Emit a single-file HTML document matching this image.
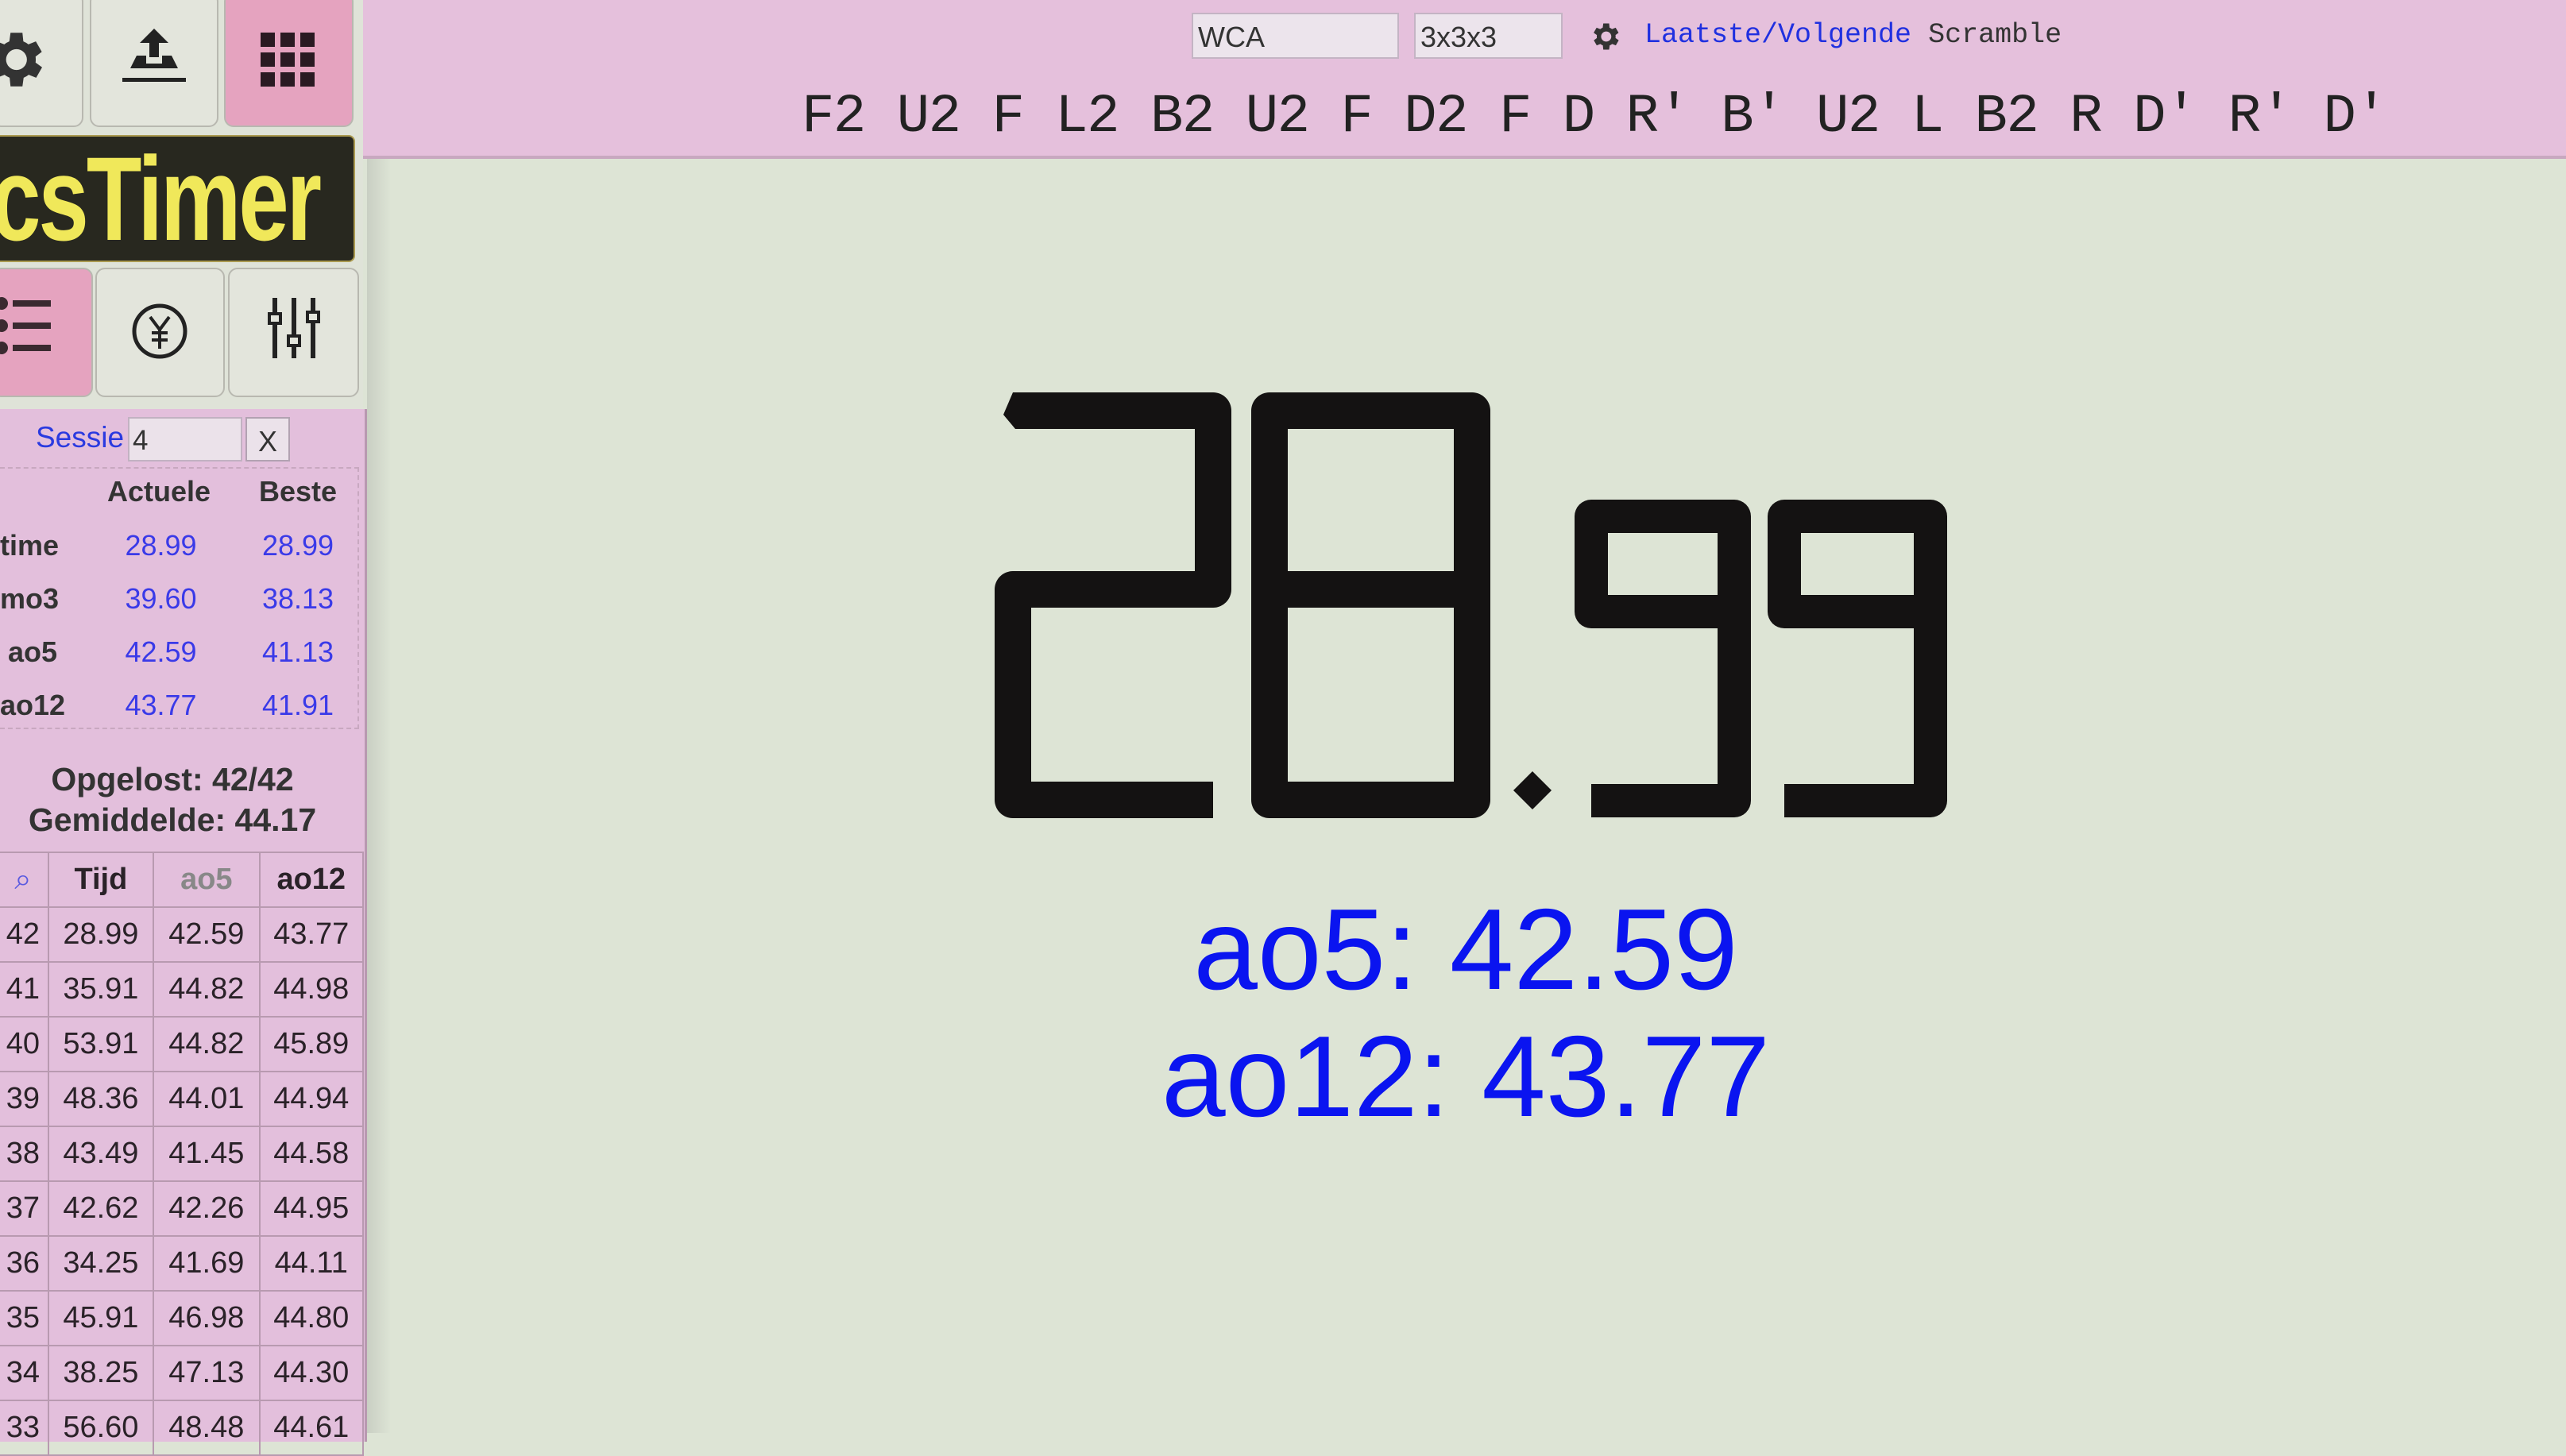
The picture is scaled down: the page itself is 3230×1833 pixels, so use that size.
<!DOCTYPE html>
<html><head><meta charset="utf-8"><style>
*{margin:0;padding:0;box-sizing:border-box}
body{width:3230px;height:1804px;overflow:hidden;background:#dde4d5;font-family:"Liberation Sans",sans-serif;position:relative}
.a{position:absolute}
.btn{position:absolute;background:#e3e5dc;border:2px solid #b8b8b0;border-radius:12px}
.pk{background:#e5a3bf}
.sb{position:absolute;left:0;top:515px;width:462px;height:1300px;background:#e3bfdc;border-right:3px solid #b898b0}
.c{position:absolute;text-align:center}
td{border:2px solid #b89ab0;text-align:center;font-size:38px;color:#2a2228;height:69px}
</style></head><body>
<div class="a" style="left:462px;top:0;width:30px;height:1804px;background:linear-gradient(90deg,#c9cfc3,#dde4d5)"></div>
<!-- top bar -->
<div class="a" style="left:457px;top:0;width:2773px;height:200px;background:#e5c0dc;border-bottom:4px solid #c8a8c0"></div>
<div class="a" style="left:1500px;top:16px;width:261px;height:58px;background:#ece4ec;border:2px solid #c4b4c4;font-size:36px;padding:8px 6px;color:#333">WCA</div>
<div class="a" style="left:1780px;top:16px;width:187px;height:58px;background:#ece4ec;border:2px solid #c4b4c4;font-size:36px;padding:8px 6px;color:#333">3x3x3</div>
<svg class="a" style="left:1998px;top:24px" width="44" height="44" viewBox="0 0 24 24"><path fill="#333" d="M19.4 13a7.5 7.5 0 000-2l2.1-1.6-2-3.5-2.5 1a7 7 0 00-1.7-1L15 3h-4l-.4 2.9a7 7 0 00-1.7 1l-2.5-1-2 3.5L6.6 11a7.5 7.5 0 000 2l-2.1 1.6 2 3.5 2.5-1a7 7 0 001.7 1L11 21h4l.4-2.9a7 7 0 001.7-1l2.5 1 2-3.5zM13 15.5a3.5 3.5 0 110-7 3.5 3.5 0 010 7z"/></svg>
<div class="a" style="left:2070px;top:24px;font-family:'Liberation Mono',monospace;font-size:35px;color:#2030e0;white-space:nowrap">Laatste/Volgende <span style="color:#333">Scramble</span></div>
<div class="a" style="left:1009px;top:108px;font-family:'Liberation Mono',monospace;font-size:69px;color:#222;white-space:nowrap;letter-spacing:-1.5px">F2 U2 F L2 B2 U2 F D2 F D R' B' U2 L B2 R D' R' D'</div>
<!-- sidebar buttons -->
<div class="a" style="left:0;top:0;width:457px;height:515px;background:#dfe3d8"></div>
<div class="btn" style="left:-10px;top:-10px;width:115px;height:170px"></div>
<svg class="a" style="left:-28px;top:30px" width="90" height="90" viewBox="0 0 24 24"><path fill="#333" d="M19.4 13a7.5 7.5 0 000-2l2.1-1.6-2-3.5-2.5 1a7 7 0 00-1.7-1L15 3h-4l-.4 2.9a7 7 0 00-1.7 1l-2.5-1-2 3.5L6.6 11a7.5 7.5 0 000 2l-2.1 1.6 2 3.5 2.5-1a7 7 0 001.7 1L11 21h4l.4-2.9a7 7 0 001.7-1l2.5 1 2-3.5zM13 15.5a3.5 3.5 0 110-7 3.5 3.5 0 010 7z"/></svg>
<div class="btn" style="left:113px;top:-10px;width:162px;height:170px"></div>
<svg class="a" style="left:154px;top:36px" width="80" height="72" viewBox="0 0 80 72"><path fill="#222" d="M40 0L22 18h12v18h12V18h12z"/><path fill="#222" d="M10 50l8-16h12v10h20V34h12l8 16z"/><rect x="0" y="62" width="80" height="5" fill="#222"/></svg>
<div class="btn pk" style="left:282px;top:-10px;width:163px;height:170px"></div>
<svg class="a" style="left:328px;top:41px" width="68" height="68" viewBox="0 0 68 68" fill="#2a1a22"><rect x="0" y="0" width="18" height="18"/><rect x="25" y="0" width="18" height="18"/><rect x="50" y="0" width="18" height="18"/><rect x="0" y="25" width="18" height="18"/><rect x="25" y="25" width="18" height="18"/><rect x="50" y="25" width="18" height="18"/><rect x="0" y="50" width="18" height="18"/><rect x="25" y="50" width="18" height="18"/><rect x="50" y="50" width="18" height="18"/></svg>
<div class="a" style="left:-10px;top:170px;width:457px;height:160px;background:#28281f;border-radius:8px;border:2px solid #aa9a50;overflow:hidden"></div>
<div class="a" style="left:-398px;top:180px;font-size:150px;font-weight:bold;color:#f0e85a;letter-spacing:-4px;transform:scaleX(.76);transform-origin:right;width:800px;text-align:right;line-height:140px;white-space:nowrap;font-family:'Liberation Sans',sans-serif">csTimer</div>
<div class="btn pk" style="left:-10px;top:337px;width:127px;height:163px"></div>
<svg class="a" style="left:-8px;top:370px" width="80" height="80" viewBox="0 0 80 80" fill="#3a2a30"><circle cx="10" cy="12" r="8"/><circle cx="10" cy="40" r="8"/><circle cx="10" cy="68" r="8"/><rect x="24" y="8" width="48" height="8"/><rect x="24" y="36" width="48" height="8"/><rect x="24" y="64" width="48" height="8"/></svg>
<div class="btn" style="left:120px;top:337px;width:163px;height:163px"></div>
<svg class="a" style="left:165px;top:381px" width="72" height="72" viewBox="0 0 72 72"><circle cx="36" cy="36" r="32" fill="none" stroke="#222" stroke-width="5"/><path d="M24 18l12 16 12-16M36 34v24M26 38h20M26 47h20" stroke="#222" stroke-width="4" fill="none"/></svg>
<div class="btn" style="left:287px;top:337px;width:165px;height:163px"></div>
<svg class="a" style="left:335px;top:375px" width="70" height="76" viewBox="0 0 70 76" fill="none" stroke="#222" stroke-width="6"><path d="M11 0v76M35 0v76M59 0v76"/><rect x="4" y="20" width="14" height="12" fill="#e3e5dc" stroke-width="4"/><rect x="28" y="48" width="14" height="12" fill="#e3e5dc" stroke-width="4"/><rect x="52" y="18" width="14" height="12" fill="#e3e5dc" stroke-width="4"/></svg>
<!-- session panel -->
<div class="sb"></div>
<div class="a" style="left:45px;top:530px;font-size:37px;color:#2a3ae0">Sessie</div>
<div class="a" style="left:161px;top:525px;width:144px;height:56px;background:#ebe2ea;border:2px solid #c2b2c2;font-size:35px;padding:8px 4px;color:#333">4</div>
<div class="a" style="left:309px;top:525px;width:56px;height:56px;background:#ebe2ea;border:2px solid #b2a2b2;font-size:36px;text-align:center;padding-top:8px;color:#333">X</div>
<div class="a" style="left:0;top:588px;width:452px;height:330px;border:2px dashed #c8a8c0;border-left:none"></div>
<div class="c" style="left:120px;top:598px;width:160px;font-size:36px;font-weight:bold;color:#333">Actuele</div>
<div class="c" style="left:300px;top:598px;width:150px;font-size:36px;font-weight:bold;color:#333">Beste</div>
<div class="a" style="left:0;top:653px;font-size:36px;color:#333;line-height:67px;font-weight:bold">time<br>mo3<br>&nbsp;ao5<br>ao12</div>
<div class="c" style="left:120px;top:653px;width:165px;font-size:36px;color:#3a3ae8;line-height:67px">28.99<br>39.60<br>42.59<br>43.77</div>
<div class="c" style="left:300px;top:653px;width:150px;font-size:36px;color:#3a3ae8;line-height:67px">28.99<br>38.13<br>41.13<br>41.91</div>
<div class="c" style="left:0;top:956px;width:434px;font-size:41px;font-weight:bold;color:#333;line-height:51px">Opgelost: 42/42<br>Gemiddelde: 44.17</div>
<table class="a" style="left:-4px;top:1072px;border-collapse:collapse;width:462px">
<colgroup><col style="width:64px"><col style="width:133px"><col style="width:134px"><col style="width:131px"></colgroup>
<tr><td style="color:#5a5ae0">&#x2315;</td><td><b>Tijd</b></td><td><b style="color:#888">ao5</b></td><td><b>ao12</b></td></tr>
<tr><td>42</td><td>28.99</td><td>42.59</td><td>43.77</td></tr>
<tr><td>41</td><td>35.91</td><td>44.82</td><td>44.98</td></tr>
<tr><td>40</td><td>53.91</td><td>44.82</td><td>45.89</td></tr>
<tr><td>39</td><td>48.36</td><td>44.01</td><td>44.94</td></tr>
<tr><td>38</td><td>43.49</td><td>41.45</td><td>44.58</td></tr>
<tr><td>37</td><td>42.62</td><td>42.26</td><td>44.95</td></tr>
<tr><td>36</td><td>34.25</td><td>41.69</td><td>44.11</td></tr>
<tr><td>35</td><td>45.91</td><td>46.98</td><td>44.80</td></tr>
<tr><td>34</td><td>38.25</td><td>47.13</td><td>44.30</td></tr>
<tr><td>33</td><td>56.60</td><td>48.48</td><td>44.61</td></tr>
</table>
<!-- timer -->
<svg class="a" style="left:0;top:0" width="3230" height="1804">
<g fill="none" stroke="#141212" stroke-width="46" stroke-linejoin="round" stroke-linecap="butt">
<path d="M1290 517L1527 517L1527 742L1275 742L1275 1007L1527 1007"/>
<path d="M1598 517H1853V1007H1598Z M1598 742H1853"/>
</g>
<g fill="none" stroke="#141212" stroke-width="42" stroke-linejoin="round">
<path d="M2183 770H2003V650H2183V1008H2003"/>
<path d="M2430 770H2246V650H2430V1008H2246"/>
</g>
<rect x="1912" y="978" width="34" height="34" fill="#141212" transform="rotate(45 1929 995)"/>
<polygon points="1275,494 1300,494 1300,540 1278,540 1263,522" fill="#141212"/>
</svg>
<div class="c" style="left:1300px;top:1115px;width:1090px;font-size:145px;color:#0a14f0;line-height:160px">ao5: 42.59<br>ao12: 43.77</div>
</body></html>
